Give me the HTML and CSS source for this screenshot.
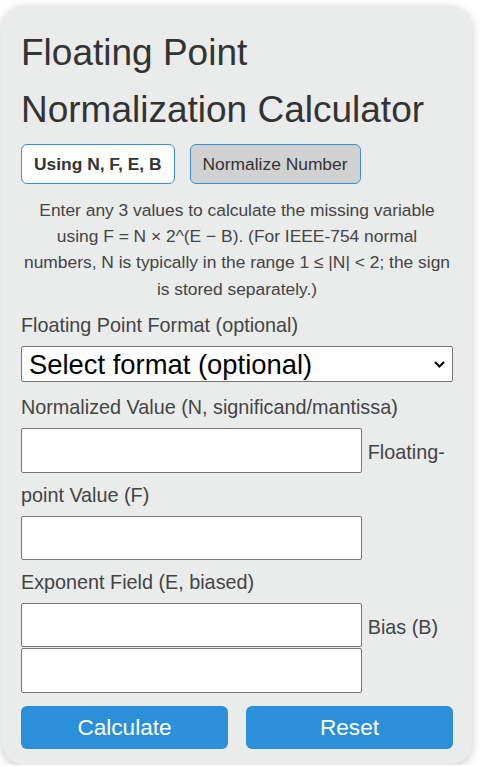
FILE: index.html
```html
<!DOCTYPE html>
<html lang="en">
<head>
    <meta charset="UTF-8">
    <meta name="viewport" content="width=device-width, initial-scale=1.0">
    <title>Floating Point Normalization Calculator</title>
    <link rel="stylesheet" href="styles.css">
</head>
<body>
    <div class="calculator">
        <h1 class="title">Floating Point Normalization Calculator</h1>

        <div class="tabs">
            <button type="button" class="tab active">Using N, F, E, B</button>
            <button type="button" class="tab">Normalize Number</button>
        </div>

        <p class="intro">Enter any 3 values to calculate the missing variable using F = N × 2^(E − B). (For IEEE-754 normal numbers, N is typically in the range 1 ≤ |N| &lt; 2; the sign is stored separately.)</p>

        <form class="fields">
            <label for="format">Floating Point Format (optional)</label>
            <div class="select-wrap">
                <select id="format" class="select">
                    <option>Select format (optional)</option>
                    <option>IEEE-754 single (32-bit)</option>
                    <option>IEEE-754 double (64-bit)</option>
                </select>
                <svg class="chevron" width="11" height="7" viewBox="0 0 11 7"><path d="M1 1l4.5 4.5L10 1" fill="none" stroke="#000" stroke-width="2"/></svg>
            </div>

            <label for="n">Normalized Value (N, significand/mantissa)</label>
            <input type="text" id="n" class="field">
            <label for="f">Floating-point Value (F)</label>
            <input type="text" id="f" class="field">
            <br>
            <label for="e">Exponent Field (E, biased)</label>
            <input type="text" id="e" class="field">
            <label for="b">Bias (B)</label>
            <input type="text" id="b" class="field">

            <div class="actions">
                <button type="button" class="btn">Calculate</button>
                <button type="reset" class="btn">Reset</button>
            </div>
        </form>
    </div>
</body>
</html>
```

FILE: styles.css
```css
body { margin: 0; font-family: "Liberation Sans", Arial, sans-serif; color: #333; }
.calculator { width: 470px; box-sizing: border-box; margin: 6px 0 0 2px; padding: 18px 19px 16px; background: #eaebeb; border-radius: 22px; box-shadow: 0 2px 10px rgba(0, 0, 0, 0.22); }
.title { margin: 0; font-size: 37px; line-height: 57px; font-weight: normal; color: #333; }

.tabs { display: flex; gap: 15px; margin-top: 6px; }
.tab { height: 40px; padding: 0 12px; font-family: inherit; font-size: 17.4px; color: #333; background: #d1d1d1; border: 1px solid #3a8fd9; border-radius: 6px; }
.tab.active { background: #fff; font-weight: bold; }

.intro { margin: 13px 0 2px; font-size: 17.4px; line-height: 26.2px; text-align: center; color: #444; }

.fields { margin: 0; font-size: 19.8px; line-height: 42px; color: #444; }
.select-wrap { position: relative; margin-bottom: 4px; }
.select { display: block; width: 100%; height: 36.5px; padding: 0 30px 0 7px; font-family: inherit; font-size: 27.4px; color: #000; background: #fff; border: 1px solid #767676; border-radius: 2px; appearance: none; -webkit-appearance: none; }
.chevron { position: absolute; right: 8px; top: 15px; }
.field { width: 79%; height: 44.5px; box-sizing: border-box; padding: 5px 8px; font-family: inherit; font-size: 27.4px; line-height: normal; background: #fff; border: 1px solid #767676; border-radius: 2px; vertical-align: baseline; }

.actions { display: grid; grid-template-columns: 1fr 1fr; gap: 18px; margin-top: 13px; }
.btn { height: 43px; font-family: inherit; font-size: 22.6px; color: #fff; background: #2b90d9; border: none; border-radius: 6px; }
```
